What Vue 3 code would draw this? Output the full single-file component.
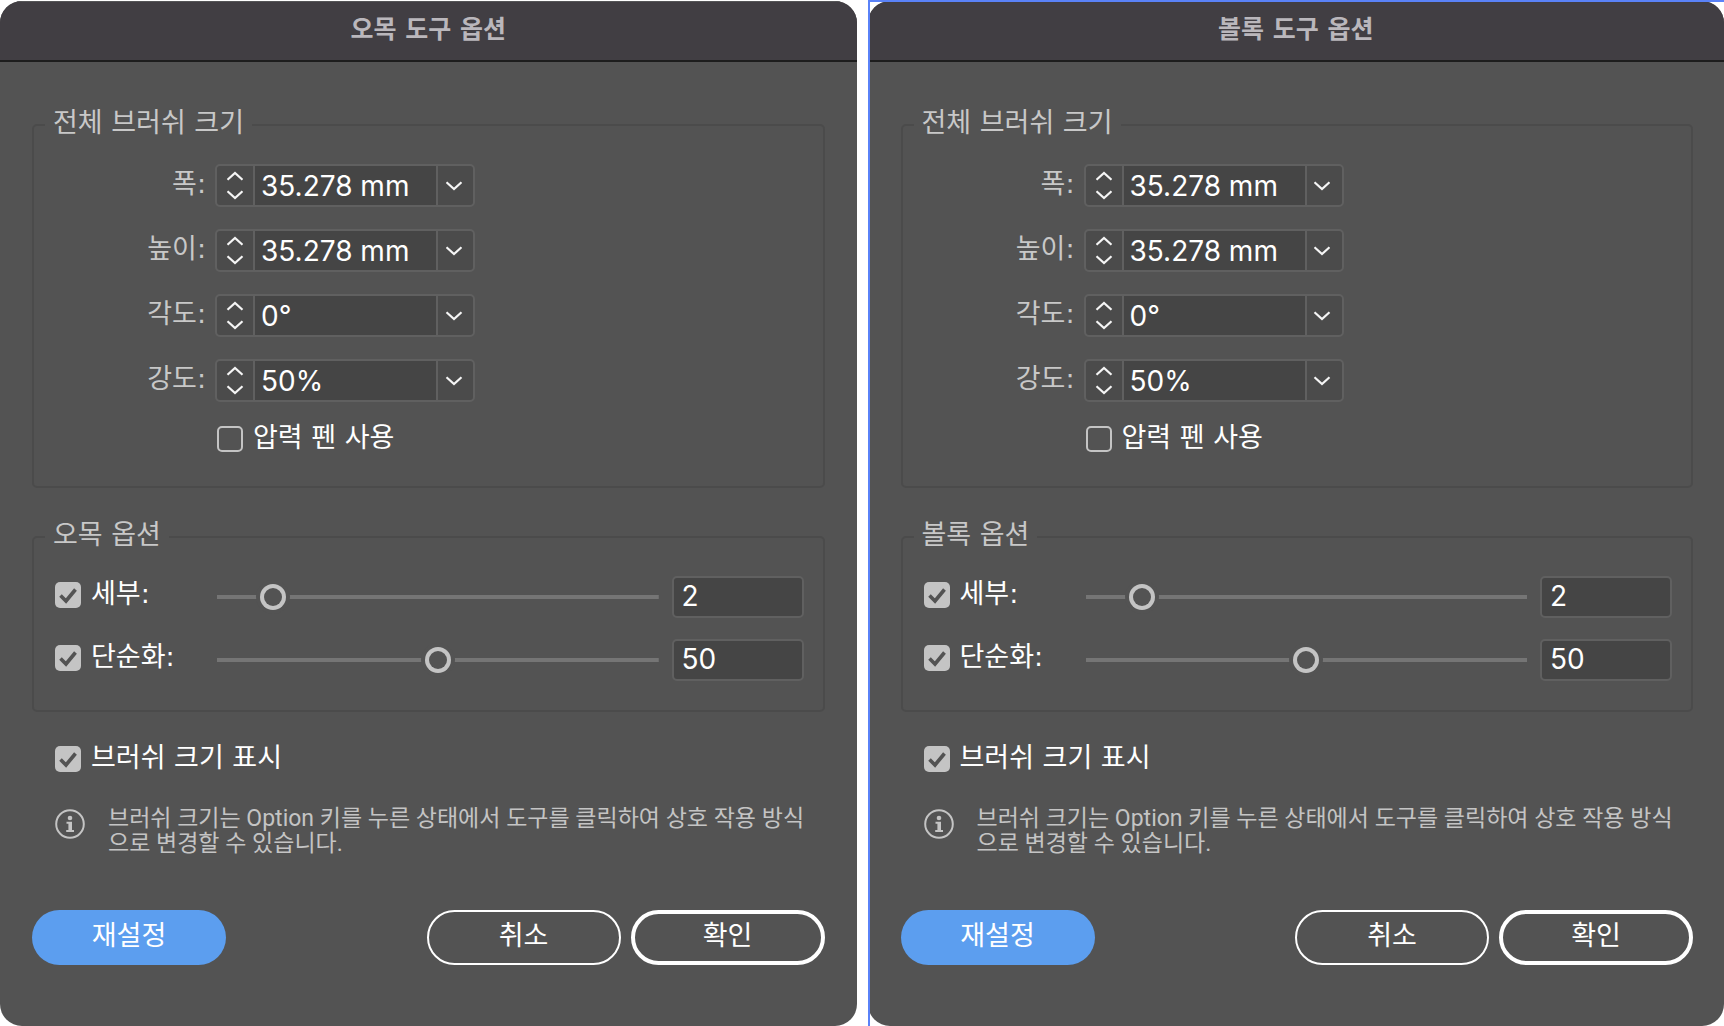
<script setup>
import { reactive } from 'vue'

const makeDialog = (id, kind, selected) => ({
  id,
  selected,
  title: `${kind} 도구 옵션`,
  group: `${kind} 옵션`,
  fields: [
    { key: 'width', label: '폭:', value: '35.278 mm' },
    { key: 'height', label: '높이:', value: '35.278 mm' },
    { key: 'angle', label: '각도:', value: '0°' },
    { key: 'intensity', label: '강도:', value: '50%' },
  ],
  pressure: false,
  sliders: [
    { key: 'detail', label: '세부:', on: true, min: 1, max: 10, value: 2 },
    { key: 'simplify', label: '단순화:', on: true, min: 0, max: 100, value: 50 },
  ],
  showSize: true,
})

const dialogs = reactive([
  makeDialog('crystallize', '오목', false),
  makeDialog('scallop', '볼록', true),
])
</script>

<template>
  <main class="board">
    <div v-for="d in dialogs" :key="d.id" class="pane" :class="{ selected: d.selected }">
      <form class="dialog" @submit.prevent>
        <header class="titlebar">
          <h1>{{ d.title }}</h1>
        </header>
        <div class="body">
          <fieldset class="group brush">
            <legend>전체 브러쉬 크기</legend>
            <div v-for="f in d.fields" :key="f.key" class="field">
              <label :for="`${d.id}-${f.key}`">{{ f.label }}</label>
              <div class="combo">
                <div class="stepper">
                  <button type="button" aria-label="증가">
                    <svg width="18" height="10" viewBox="0 0 18 10"><path d="M1.5 8.8 9 2 16.5 8.8" /></svg>
                  </button>
                  <button type="button" aria-label="감소">
                    <svg width="18" height="10" viewBox="0 0 18 10"><path d="M1.5 1.2 9 8 16.5 1.2" /></svg>
                  </button>
                </div>
                <input :id="`${d.id}-${f.key}`" v-model="f.value" type="text" />
                <button type="button" class="drop" aria-label="사전 설정" aria-haspopup="listbox">
                  <svg width="18" height="10" viewBox="0 0 18 10"><path d="M1.5 1.2 9 8 16.5 1.2" /></svg>
                </button>
              </div>
            </div>
            <label class="check pressure">
              <input v-model="d.pressure" type="checkbox" />
              <span>압력 펜 사용</span>
            </label>
          </fieldset>

          <fieldset class="group options">
            <legend>{{ d.group }}</legend>
            <div class="slides">
              <div v-for="s in d.sliders" :key="s.key" class="slide">
                <label class="check">
                  <input v-model="s.on" type="checkbox" />
                  <span>{{ s.label }}</span>
                </label>
                <input v-model.number="s.value" type="range" :min="s.min" :max="s.max" :aria-label="s.label" />
                <input v-model.number="s.value" type="text" class="amount" :aria-label="s.label" />
              </div>
            </div>
          </fieldset>

          <label class="check show">
            <input v-model="d.showSize" type="checkbox" />
            <span>브러쉬 크기 표시</span>
          </label>

          <div class="info">
            <svg width="30" height="30" viewBox="0 0 30 30" aria-hidden="true">
              <circle cx="15" cy="15" r="13.8" fill="none" stroke="#c4c4c4" stroke-width="2" />
              <circle cx="15" cy="9" r="2.3" fill="#c4c4c4" />
              <path d="M11.5 12.8H17V21h2v2h-7.8v-2h2.2v-6.2h-1.9z" fill="#c4c4c4" />
            </svg>
            <p>브러쉬 크기는 Option 키를 누른 상태에서 도구를 클릭하여 상호 작용 방식으로 변경할 수 있습니다.</p>
          </div>

          <footer class="actions">
            <button type="button" class="reset">재설정</button>
            <button type="button" class="cancel">취소</button>
            <button type="submit" class="ok">확인</button>
          </footer>
        </div>
      </form>
    </div>
  </main>
</template>

<style>
body {
  margin: 0;
  background: #fff;
}
</style>

<style scoped>
* {
  box-sizing: border-box;
}

.board {
  display: grid;
  grid-template-columns: 1fr 1fr;
  gap: 11px;
  min-height: 100vh;
  font-family: "DejaVu Sans", "Noto Sans CJK KR", sans-serif;
  font-size: 27px;
  line-height: 28px;
  color: #fff;
}

.pane {
  position: relative;
  padding-top: 1px;
}

.selected::before {
  content: "";
  position: absolute;
  inset: 0;
  border: solid #5a82f8;
  border-width: 2px 0 0 2px;
  pointer-events: none;
}

.dialog {
  height: 100%;
  border-radius: 22px;
  background: #535353;
  overflow: hidden;
}

.titlebar {
  height: 61px;
  padding-top: 14px;
  border-top: 1px solid #555557;
  border-bottom: 2px solid #1d1d1d;
  background: #413e43;
  text-align: center;
}

h1 {
  margin: 0;
  font-size: 25px;
  line-height: 28px;
  font-weight: 700;
  color: #bab7bc;
}

.body {
  padding: 47px 32px 60px;
}

.selected .body {
  padding-right: 31px;
  padding-left: 33px;
}

button,
input {
  font: inherit;
  color: inherit;
  margin: 0;
}

button {
  padding: 0;
  border: 0;
  background: none;
}

.group {
  min-width: 0;
  margin: 0;
  padding: 0;
  border: 2px solid #4b4b4b;
  border-radius: 5px;
}

legend {
  height: 32px;
  margin-left: 11px;
  padding: 0 8px;
  color: #c8c8c8;
}

.brush {
  display: grid;
  gap: 22px;
  padding: 23px 0 34px;
}

.field {
  display: grid;
  grid-template-columns: 181px 260px;
}

.field > label {
  height: 43px;
  padding: 6px 9px 0 0;
  text-align: right;
  color: #c8c8c8;
}

.combo {
  display: flex;
  height: 43px;
  border: 2px solid #606060;
  border-radius: 5px;
  background: #4b4b4b;
}

.stepper {
  display: flex;
  flex-direction: column;
  justify-content: space-between;
  width: 36px;
  padding: 5px 0;
}

.stepper button,
.drop {
  display: flex;
  align-items: center;
  justify-content: center;
}

.drop {
  width: 35px;
  padding-right: 4px;
}

.combo path {
  fill: none;
  stroke: #f5f5f5;
  stroke-width: 2.2;
}

.combo input {
  flex: 1;
  min-width: 0;
  padding: 0 6px;
  border: solid #606060;
  border-width: 0 2px;
  border-radius: 0;
  background: #454545;
}

.combo input,
.amount {
  font-family: Inter, sans-serif;
  font-size: 28px;
}

.check {
  display: flex;
  align-items: center;
  gap: 10px;
  height: 26px;
}

.check span {
  padding-bottom: 2px;
  white-space: nowrap;
}

.check input {
  appearance: none;
  flex: none;
  width: 26px;
  height: 26px;
  border: 2px solid #c4c4c4;
  border-radius: 5px;
}

.check input:checked {
  border: 0;
  background: #c4c4c4 url("data:image/svg+xml,%3Csvg xmlns='http://www.w3.org/2000/svg' viewBox='0 0 26 26'%3E%3Cpath d='M5.5 13.5 11 19 20.5 7.5' fill='none' stroke='%23535353' stroke-width='3.6'/%3E%3C/svg%3E");
}

.pressure {
  margin: 2px 0 0 183px;
}

.options {
  margin-top: 33px;
}

.slides {
  display: grid;
  gap: 21px;
  padding: 23px 19px 29px 21px;
}

.slide {
  display: grid;
  grid-template-columns: 162px 1fr 132px;
  align-items: center;
}

.slide .check {
  margin-bottom: 4px;
}

.slide input[type="range"] {
  appearance: none;
  min-width: 0;
  height: 26px;
  margin-right: 13px;
  background: linear-gradient(#757575, #757575) center / 100% 4px no-repeat;
}

.slide input[type="range"]::-webkit-slider-thumb {
  appearance: none;
  width: 18px;
  height: 18px;
  border-radius: 50%;
  background: #535353;
  box-shadow: 0 0 0 4px #c4c4c4, 0 0 0 8px #535353;
}

.amount {
  width: 100%;
  height: 42px;
  padding: 0 8px 2px;
  border: 2px solid #606060;
  border-radius: 5px;
  background: #454545;
}

.show {
  margin: 34px 0 0 23px;
}

.info {
  display: flex;
  gap: 23px;
  margin: 34px 10px 0 23px;
  color: #c4c4c4;
}

.info svg {
  flex: none;
  margin-top: 3px;
}

.info p {
  margin: 0;
  font-family: Roboto, "Noto Sans CJK KR", sans-serif;
  font-size: 23px;
  line-height: 25px;
}

.actions {
  display: flex;
  gap: 10px;
  margin-top: 54px;
}

.actions button {
  width: 194px;
  height: 55px;
  padding-bottom: 4px;
  border-radius: 28px;
}

.actions .reset {
  margin-right: auto;
  background: #5c9eef;
}

.actions .cancel {
  border: 2px solid #fff;
}

.actions .ok {
  border: 4px solid #fff;
}
</style>
